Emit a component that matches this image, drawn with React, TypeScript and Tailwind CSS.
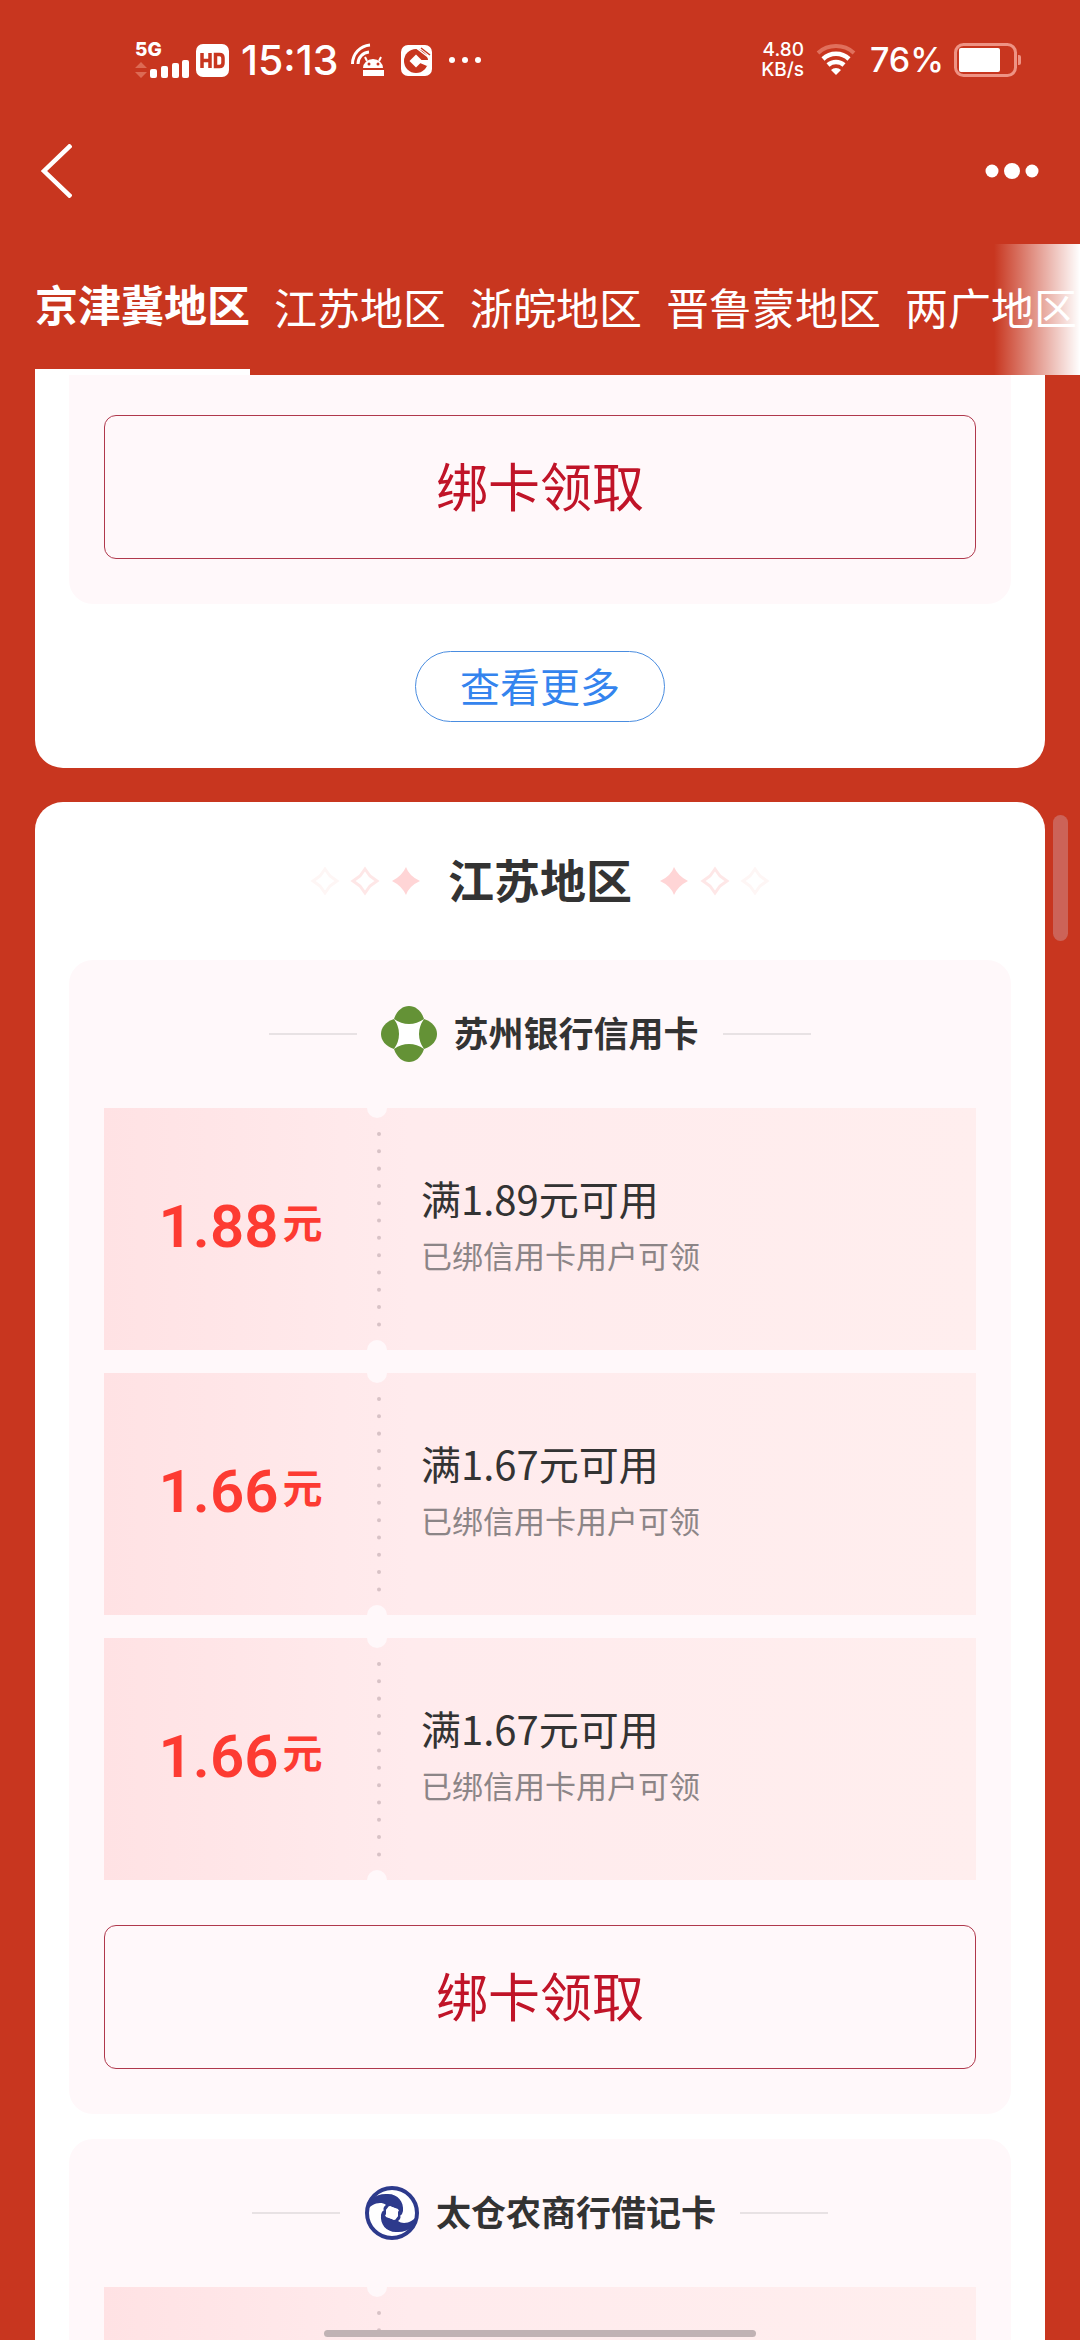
import React from "react";

const TABS = ["江苏地区", "浙皖地区", "晋鲁蒙地区", "两广地区"];

type Coupon = { amount: string; title: string };

const COUPONS: Coupon[] = [
  { amount: "1.88", title: "满1.89元可用" },
  { amount: "1.66", title: "满1.67元可用" },
  { amount: "1.66", title: "满1.67元可用" },
];

function StatusBar() {
  return (
    <header className="flex h-[112px] items-center justify-between pt-2 pr-[59px] pl-[134px]">
      <div className="flex items-center">
        <svg width="56" height="38" viewBox="0 0 56 38" fill="#fff" className="overflow-visible" role="img" aria-label="5G signal">
          <text x="1" y="15" fontSize="19" fontWeight="800" fontFamily="Inter">5G</text>
          <path d="M7 21l6 6H1z M7 37l6-6H1z" fill="#dc6a54" />
          <rect x="16" y="28" width="7" height="9" rx="2" />
          <rect x="27" y="25" width="7" height="12" rx="2" />
          <rect x="38" y="22" width="7" height="15" rx="2" />
          <rect x="48" y="19" width="7" height="18" rx="2" />
        </svg>
        <svg width="33" height="33" viewBox="0 0 33 33" className="ml-1.5" role="img" aria-label="HD">
          <rect width="33" height="33" rx="7" fill="#fff" />
          <path d="M6 9v15M14 9v15M6 16.500h8M19.500 10.500h4q3.500 0 3.500 3.500v5q0 3.500-3.500 3.500h-4z" fill="none" stroke="#c8361f" strokeWidth="3.500" />
        </svg>
        <span className="ml-3 font-['Inter'] text-[41px] leading-[48px] font-medium">15:13</span>
        <svg width="34" height="34" viewBox="0 0 34 34" className="ml-3" fill="none" stroke="#fff" role="img" aria-label="Debugging">
          <path d="M1.500 21A19 19 0 0 1 19 2M7 21A12 12 0 0 1 18 9" strokeWidth="3" />
          <path d="M12 25a10 9 0 0 1 20 0z M12 27h21v6H12z" fill="#fff" stroke="none" />
          <path d="M16 18l-2-4M28 18l2-4" strokeWidth="2" />
          <circle cx="18" cy="21" r="1.500" fill="#c8361f" stroke="none" />
          <circle cx="27" cy="21" r="1.500" fill="#c8361f" stroke="none" />
        </svg>
        <svg width="31" height="31" viewBox="0 0 31 31" className="ml-4" role="img" aria-label="Bank">
          <rect width="31" height="31" rx="7" fill="#fff" />
          <circle cx="15" cy="16" r="12" fill="#c8361f" />
          <path d="M15 9.500l6.500 6.500-6.500 6.500L8.500 16z" fill="#fff" />
          <path d="M17 15h12v3l-3 3-7-3z" fill="#fff" />
          <path d="M16 3.500l13 10M19 3l10 8" stroke="#fff" strokeWidth="1.500" />
          <path d="M20 3l9 7" stroke="#c8361f" strokeWidth="1.500" />
        </svg>
        <svg width="34" height="8" viewBox="0 0 34 8" className="ml-4" fill="#fff" aria-hidden="true">
          <circle cx="4" cy="4" r="3" /><circle cx="17" cy="4" r="3" /><circle cx="30" cy="4" r="3" />
        </svg>
      </div>
      <div className="flex items-center">
        <div className="flex flex-col items-end font-['Inter'] text-[19px] leading-[20px] font-medium">
          <span>4.80</span>
          <span>KB/s</span>
        </div>
        <svg width="40" height="32" viewBox="0 0 40 32" className="ml-3" fill="none" stroke="#fff" role="img" aria-label="Wi-Fi">
          <path d="M2 9a27 27 0 0 1 36 0" strokeWidth="4" stroke="#e0705c" />
          <path d="M7 15a19 19 0 0 1 26 0M12 21a12 12 0 0 1 16 0" strokeWidth="4.500" />
          <path d="M20 31l-5-5a7 7 0 0 1 10 0z" fill="#fff" stroke="none" />
        </svg>
        <span className="ml-3.5 font-['Inter'] text-[34px] leading-10 font-medium">76%</span>
        <svg width="67" height="34" viewBox="0 0 67 34" className="ml-2.5" role="img" aria-label="Battery 76%">
          <rect x="1.500" y="1.500" width="60" height="31" rx="8" fill="none" stroke="#ee9384" strokeWidth="3" />
          <rect x="5" y="5" width="41" height="24" rx="2" fill="#fff" />
          <path d="M64 12h1q2 0 2 2v6q0 2-2 2h-1z" fill="#ee9384" />
        </svg>
      </div>
    </header>
  );
}

function NavBar() {
  return (
    <nav className="flex h-[132px] items-start justify-between pt-8 pr-10 pl-10">
      <button aria-label="返回">
        <svg width="32" height="54" viewBox="0 0 32 54" fill="none" stroke="#fff" strokeWidth="4.500">
          <path d="M31 1L4 27l27 26" />
        </svg>
      </button>
      <button aria-label="更多" className="mt-[18px]">
        <svg width="56" height="18" viewBox="0 0 56 18" fill="#fff">
          <circle cx="8" cy="9" r="6.500" /><circle cx="28" cy="9" r="8" /><circle cx="48" cy="9" r="6.500" />
        </svg>
      </button>
    </nav>
  );
}

function TabBar() {
  return (
    <div className="relative overflow-hidden">
      <div role="tablist" className="flex h-[131px] gap-6 pl-[35px] text-[43px] leading-[64px] whitespace-nowrap">
        <button role="tab" aria-selected="true" className="shrink-0 border-b-[6px] border-white pb-2 font-bold">京津冀地区</button>
        {TABS.map((t) => (
          <button key={t} role="tab" aria-selected="false" className="shrink-0 pb-2">{t}</button>
        ))}
      </div>
      <div className="pointer-events-none absolute inset-y-0 right-0 w-[86px] bg-linear-to-r from-white/0 to-white" />
    </div>
  );
}

function ClaimButton() {
  return (
    <button className="h-36 w-full rounded-xl border border-[#b0384c] pb-1 text-[52px] leading-[76px] text-[#c01428]">绑卡领取</button>
  );
}

function Sparkles({ flip = false }: { flip?: boolean }) {
  return (
    <svg width="110" height="30" viewBox="-1 -1 110 30" className={flip ? "-scale-x-100" : ""} aria-hidden="true">
      <path d="M14 2l5 7 7 5-7 5-5 7-5-7-7-5 7-5z" fill="none" stroke="#fef6f5" strokeWidth="3" />
      <path d="M54 2l5 7 7 5-7 5-5 7-5-7-7-5 7-5z" fill="none" stroke="#fee7e7" strokeWidth="3" />
      <path d="M95 0Q98 9 109 14Q98 19 95 28Q91 19 81 14Q91 9 95 0Z" fill="#ffd5d6" />
    </svg>
  );
}

const PETAL = "M13 13C16 4 22 0 28 0S40 4 43 13Q36 18 28 18T13 13Z";

function SuzhouLogo() {
  return (
    <svg width="56" height="56" viewBox="0 0 56 56" className="shrink-0" role="img" aria-label="苏州银行">
      <path d="M13 13h30v30H13z" fill="#fff" />
      <g fill="#649236">
        <path d={PETAL} />
        <path d={PETAL} transform="rotate(90 28 28)" />
        <path d={PETAL} transform="rotate(180 28 28)" />
        <path d={PETAL} transform="rotate(270 28 28)" />
      </g>
    </svg>
  );
}

const WAVE = "M2 27C3 15 12 8 24 9C34 9 40 17 39 26C38 30 37 31 34 31L34 24L25 21L21 26C18 25 20 21 22 20C17 16 7 18 2 27Z";

function TaicangLogo() {
  return (
    <svg width="56" height="56" viewBox="0 0 56 56" className="shrink-0" role="img" aria-label="太仓农商行">
      <circle cx="28" cy="28" r="25" fill="#fff" stroke="#2d3a8c" strokeWidth="4" />
      <g fill="#2d3a8c">
        <path d={WAVE} />
        <path d={WAVE} transform="rotate(180 28 28)" />
      </g>
      <path d="M26 21l9 4-5 10-9-4z" fill="#fff" />
    </svg>
  );
}

function BankHeader({ logo, name }: { logo: React.ReactNode; name: string }) {
  return (
    <div className="flex h-[148px] items-center justify-center">
      <span className="h-0.5 w-22 bg-[#e8e2e4]" />
      <span className="ml-6">{logo}</span>
      <h3 className="mr-6 ml-4 pb-1 text-[35px] leading-[52px] font-bold text-[#333]">{name}</h3>
      <span className="h-0.5 w-22 bg-[#e8e2e4]" />
    </div>
  );
}

function CouponCard({ coupon }: { coupon?: Coupon }) {
  return (
    <li className="relative flex h-[242px] overflow-hidden bg-linear-to-r from-[#ffe2e4] via-[#ffebed] via-35% to-[#ffeeee]">
      <div className="flex w-[273px] shrink-0 items-center justify-center pb-1 font-bold text-[#fd3b32]">
        {coupon && (
          <p className="flex items-start gap-1">
            <span className="font-['Roboto'] text-[60px] leading-[68px] font-semibold">{coupon.amount}</span>
            <span className="text-[40px] leading-[56px]">元</span>
          </p>
        )}
      </div>
      <div className="flex flex-col items-center justify-center">
        <svg width="4" height="196" viewBox="0 0 4 196" aria-hidden="true">
          <path d="M2 3v192" stroke="#d8c2c6" strokeWidth="4" strokeLinecap="round" strokeDasharray="0.01 17.300" />
        </svg>
      </div>
      <span className="absolute -top-[10px] left-[263px] size-5 rounded-full bg-[#fff8fa]" />
      <span className="absolute -bottom-[10px] left-[263px] size-5 rounded-full bg-[#fff8fa]" />
      {coupon && (
        <div className="ml-10 flex flex-col justify-center pb-1.5">
          <p className="text-[40px] leading-[58px] text-[#333]">{coupon.title}</p>
          <p className="text-[31px] leading-[56px] text-[#8c8587]">已绑信用卡用户可领</p>
        </div>
      )}
    </li>
  );
}

export default function App() {
  return (
    <div className="relative h-screen overflow-hidden bg-[#c8361f] font-['Noto_Sans_CJK_SC',sans-serif] text-white">
      <StatusBar />
      <NavBar />
      <TabBar />
      <main className="px-[35px]">
        <section className="rounded-b-[28px] bg-white px-[34px] pb-[46px]">
          <div className="rounded-b-[24px] bg-[#fff8fa] px-[35px] pt-10 pb-[45px]">
            <ClaimButton />
          </div>
          <div className="mt-[47px] flex justify-center">
            <button className="h-[71px] w-[250px] rounded-full border border-[#4a8de0] pb-1 text-[40px] leading-[58px] text-[#3484ee]">查看更多</button>
          </div>
        </section>

        <section className="mt-[34px] rounded-t-[28px] bg-white px-[34px]">
          <div className="flex h-[158px] items-center justify-center gap-7">
            <Sparkles />
            <h2 className="pb-1.5 text-[46px] leading-[68px] font-bold text-[#333]">江苏地区</h2>
            <Sparkles flip />
          </div>
          <article className="rounded-[24px] bg-[#fff8fa] px-[35px] pb-[45px]">
            <BankHeader logo={<SuzhouLogo />} name="苏州银行信用卡" />
            <ul className="mb-[45px] flex flex-col gap-[23px]">
              {COUPONS.map((c, i) => (
                <CouponCard key={i} coupon={c} />
              ))}
            </ul>
            <ClaimButton />
          </article>
          <article className="mt-[25px] rounded-t-[24px] bg-[#fff8fa] px-[35px]">
            <BankHeader logo={<TaicangLogo />} name="太仓农商行借记卡" />
            <ul>
              <CouponCard />
            </ul>
          </article>
        </section>
      </main>
      <div className="absolute top-[815px] right-3 h-[126px] w-[15px] rounded-full bg-[#cc6358]" />
      <div className="absolute inset-x-[30%] bottom-[3px] h-[7px] rounded-full bg-[#c0b2b4]" />
    </div>
  );
}
